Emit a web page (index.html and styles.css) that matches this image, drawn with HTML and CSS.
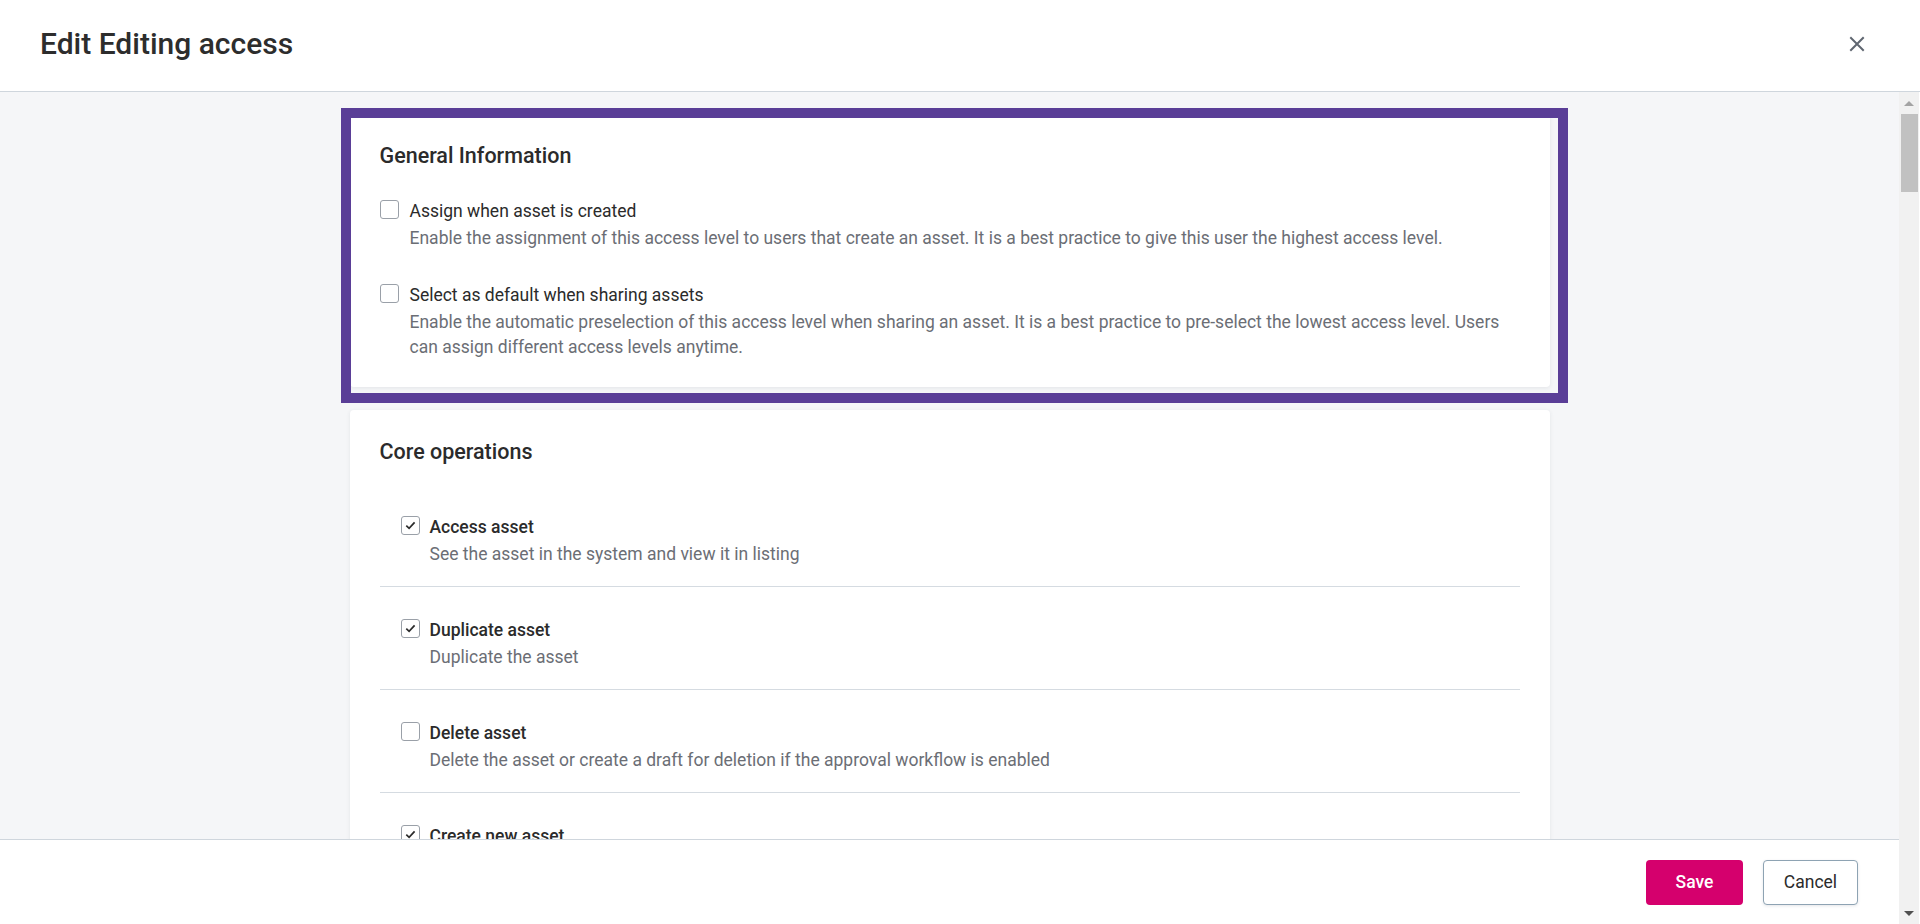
FILE: index.html
```html
<!DOCTYPE html>
<html lang="en">
<head>
<meta charset="utf-8">
<title>Edit Editing access</title>
<link rel="stylesheet" href="styles.css">
</head>
<body>
<header class="header">
  <h1 class="title">Edit Editing access</h1>
  <button class="close" aria-label="Close">
    <svg width="16" height="16" viewBox="0 0 16 16"><path d="M2 2 L14 14 M14 2 L2 14" stroke="#5f6670" stroke-width="2" stroke-linecap="square" fill="none"/></svg>
  </button>
</header>

<div class="body-row">
  <div class="viewport">
    <main class="content">
      <section class="card is-focused">
        <h2 class="card-title">General Information</h2>
        <div class="opt-list">
          <label class="opt">
            <span class="box"></span>
            <span class="opt-text">
              <span class="opt-label">Assign when asset is created</span>
              <span class="opt-desc">Enable the assignment of this access level to users that create an asset. It is a best practice to give this user the highest access level.</span>
            </span>
          </label>
          <label class="opt">
            <span class="box"></span>
            <span class="opt-text">
              <span class="opt-label">Select as default when sharing assets</span>
              <span class="opt-desc">Enable the automatic preselection of this access level when sharing an asset. It is a best practice to pre-select the lowest access level. Users can assign different access levels anytime.</span>
            </span>
          </label>
        </div>
      </section>

      <section class="card">
        <h2 class="card-title">Core operations</h2>
        <div class="perm-list">
          <label class="perm">
            <span class="box"><svg width="13" height="13" viewBox="0 0 13 13"><path d="M2.3 6.6 L5.1 9.3 L10.6 3.4" stroke="#2b2b2b" stroke-width="1.7" fill="none"/></svg></span>
            <span class="opt-text"><span class="perm-label">Access asset</span><span class="opt-desc">See the asset in the system and view it in listing</span></span>
          </label>
          <label class="perm">
            <span class="box"><svg width="13" height="13" viewBox="0 0 13 13"><path d="M2.3 6.6 L5.1 9.3 L10.6 3.4" stroke="#2b2b2b" stroke-width="1.7" fill="none"/></svg></span>
            <span class="opt-text"><span class="perm-label">Duplicate asset</span><span class="opt-desc">Duplicate the asset</span></span>
          </label>
          <label class="perm">
            <span class="box"></span>
            <span class="opt-text"><span class="perm-label">Delete asset</span><span class="opt-desc">Delete the asset or create a draft for deletion if the approval workflow is enabled</span></span>
          </label>
          <label class="perm">
            <span class="box"><svg width="13" height="13" viewBox="0 0 13 13"><path d="M2.3 6.6 L5.1 9.3 L10.6 3.4" stroke="#2b2b2b" stroke-width="1.7" fill="none"/></svg></span>
            <span class="opt-text"><span class="perm-label">Create new asset</span><span class="opt-desc">Create a new asset or a draft for a new asset if the approval workflow is enabled</span></span>
          </label>
        </div>
      </section>
    </main>

    <footer class="footer">
      <button class="btn btn-primary">Save</button>
      <button class="btn btn-secondary">Cancel</button>
    </footer>
  </div>

  <div class="scrollbar" aria-hidden="true">
    <div class="sb-btn"><span class="arrow-up"></span></div>
    <div class="sb-thumb"></div>
    <div class="sb-track"></div>
    <div class="sb-btn"><span class="arrow-down"></span></div>
  </div>
</div>
</body>
</html>
```
FILE: styles.css
```css
* { box-sizing: border-box; }

html, body {
  margin: 0;
  height: 100%;
}

body {
  font-family: Roboto, "Liberation Sans", Arial, sans-serif;
  color: #2b2b2b;
  background: #fff;
  display: flex;
  flex-direction: column;
  overflow: hidden;
}

.header {
  flex: none;
  height: 92px;
  display: flex;
  align-items: center;
  justify-content: space-between;
  padding: 0 55px 4px 40px;
  border-bottom: 1px solid #cfd6dd;
}

.title {
  margin: 0;
  font-size: 30px;
  font-weight: 500;
  color: #2d2d2d;
}

.close {
  border: 0;
  background: none;
  padding: 0;
  width: 16px;
  height: 16px;
  display: flex;
  cursor: pointer;
}

.body-row {
  flex: 1;
  min-height: 0;
  display: flex;
}

.viewport {
  flex: 1;
  min-width: 0;
  display: flex;
  flex-direction: column;
  background: #f5f6f8;
}

.content {
  flex: 1;
  min-height: 0;
  overflow: hidden;
  display: flex;
  flex-direction: column;
  align-items: center;
  gap: 23px;
  padding-top: 22px;
}

.card {
  flex: none;
  position: relative;
  width: 1200px;
  background: #fff;
  border-radius: 4px;
  box-shadow: 0 1px 4px rgba(40, 50, 70, 0.09);
  padding: 30px 30px 27px;
}

.card.is-focused::after {
  content: "";
  position: absolute;
  top: -6px;
  left: -9px;
  right: -18px;
  bottom: -16px;
  border: 10px solid #5a3e97;
  pointer-events: none;
}

.card-title {
  margin: 0;
  font-size: 21.5px;
  line-height: 24px;
  font-weight: 500;
  color: #2b2b2b;
}

.opt-list {
  margin-top: 31px;
  display: flex;
  flex-direction: column;
  gap: 32px;
}

.opt {
  display: flex;
  gap: 11px;
}

.box {
  flex: none;
  width: 19px;
  height: 19px;
  margin-top: 1px;
  border: 1px solid #9aa0a8;
  border-radius: 3px;
  background: #fff;
  display: flex;
  align-items: center;
  justify-content: center;
}

.opt-text {
  display: flex;
  flex-direction: column;
}

.opt-label,
.perm-label {
  font-size: 17.5px;
  line-height: 24px;
  color: #2b2b2b;
}

.perm-label { font-weight: 500; }

.opt-desc {
  margin-top: 3px;
  font-size: 17.5px;
  line-height: 25px;
  color: #6b6e75;
}

.perm-list {
  margin-top: 20px;
  display: flex;
  flex-direction: column;
}

.perm {
  display: flex;
  gap: 10px;
  padding: 31px 0 19px 21px;
  border-bottom: 1px solid #d5dbe1;
}

.footer {
  flex: none;
  height: 85px;
  background: #fff;
  border-top: 1px solid #cfd6dd;
  display: flex;
  justify-content: flex-end;
  align-items: center;
  gap: 20px;
  padding-right: 41px;
}

.btn {
  height: 45px;
  border-radius: 4px;
  font-family: inherit;
  font-size: 17.5px;
  cursor: pointer;
}

.btn-primary {
  width: 97px;
  border: 0;
  background: #d5006d;
  color: #fff;
  font-weight: 500;
}

.btn-secondary {
  width: 95px;
  border: 1px solid #8ea3b3;
  background: #fff;
  color: #2b2b2b;
  box-shadow: 0 1px 3px rgba(40, 50, 70, 0.12);
}

/* static scrollbar drawn beside the scrolling area */
.scrollbar {
  flex: none;
  width: 21px;
  display: flex;
  flex-direction: column;
  background: #f1f1f1;
  border-right: 1px solid #fff;
}

.sb-btn {
  flex: none;
  height: 22px;
  display: flex;
  align-items: center;
  justify-content: center;
}

.arrow-up {
  width: 0;
  height: 0;
  border-left: 5px solid transparent;
  border-right: 5px solid transparent;
  border-bottom: 5px solid #a3a3a3;
}

.arrow-down {
  width: 0;
  height: 0;
  border-left: 5px solid transparent;
  border-right: 5px solid transparent;
  border-top: 5px solid #505050;
}

.sb-thumb {
  flex: none;
  height: 78px;
  margin: 0 1px 0 2px;
  background: #c1c1c1;
}

.sb-track { flex: 1; }
```
